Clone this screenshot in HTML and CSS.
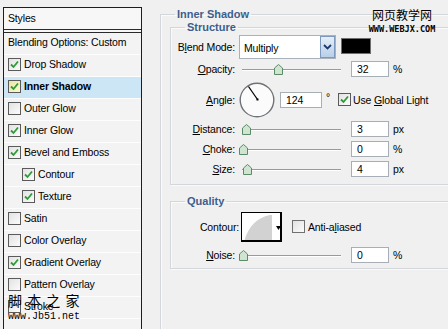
FILE: index.html
```html
<!DOCTYPE html>
<html>
<head>
<meta charset="utf-8">
<link rel="stylesheet" href="styles.css">
</head>
<body>
<div class="styles-panel">
  <div class="hdr">Styles</div>
  <div class="row plain">Blending Options: Custom</div>
  <div class="row"><span class="cb on"><svg viewBox="0 0 11 11"><path d="M2 5.5 L4.5 8 L9 2.5" /></svg></span>Drop Shadow</div>
  <div class="row sel"><span class="cb on hot"><svg viewBox="0 0 11 11"><path d="M2 5.5 L4.5 8 L9 2.5" /></svg></span><b>Inner Shadow</b></div>
  <div class="row"><span class="cb"></span>Outer Glow</div>
  <div class="row"><span class="cb on"><svg viewBox="0 0 11 11"><path d="M2 5.5 L4.5 8 L9 2.5" /></svg></span>Inner Glow</div>
  <div class="row"><span class="cb on"><svg viewBox="0 0 11 11"><path d="M2 5.5 L4.5 8 L9 2.5" /></svg></span>Bevel and Emboss</div>
  <div class="row sub"><span class="cb on"><svg viewBox="0 0 11 11"><path d="M2 5.5 L4.5 8 L9 2.5" /></svg></span>Contour</div>
  <div class="row sub"><span class="cb on"><svg viewBox="0 0 11 11"><path d="M2 5.5 L4.5 8 L9 2.5" /></svg></span>Texture</div>
  <div class="row"><span class="cb"></span>Satin</div>
  <div class="row"><span class="cb"></span>Color Overlay</div>
  <div class="row"><span class="cb on"><svg viewBox="0 0 11 11"><path d="M2 5.5 L4.5 8 L9 2.5" /></svg></span>Gradient Overlay</div>
  <div class="row"><span class="cb"></span>Pattern Overlay</div>
  <div class="row"><span class="cb"></span>Stroke</div>
</div>

<div class="main">
  <fieldset class="box outer">
    <legend>Inner Shadow</legend>
    <fieldset class="box inner structure">
      <legend>Structure</legend>
      <div class="line blend">
        <label class="lbl">B<u>l</u>end Mode:</label>
        <div class="select"><span class="sv">Multiply</span><span class="sbtn"><svg viewBox="0 0 9 6"><path d="M1 1 L4.5 4.5 L8 1"/></svg></span></div>
        <span class="swatch"></span>
      </div>
      <div class="line h16 opacity">
        <label class="lbl"><u>O</u>pacity:</label>
        <div class="slider"><span class="thumb" style="left:35px"><svg viewBox="0 0 9 11"><path d="M0.5 4 L4.5 0.5 L8.5 4 L8.5 10.5 L0.5 10.5 Z"/></svg></span></div>
        <span class="num">32</span><span class="unit">%</span>
      </div>
      <div class="line angle">
        <label class="lbl"><u>A</u>ngle:</label>
        <span class="dial"><svg viewBox="0 0 36 36"><circle cx="18" cy="18" r="16.8"/><line x1="18.5" y1="17.5" x2="9.5" y2="4.5"/><rect x="17.5" y="16.5" width="2" height="2"/></svg></span>
        <span class="num ang">124</span><span class="deg">°</span>
        <span class="cb on gl"><svg viewBox="0 0 11 11"><path d="M2 5.5 L4.5 8 L9 2.5" /></svg></span><span>Use <u>G</u>lobal Light</span>
      </div>
      <div class="line h16 dist">
        <label class="lbl"><u>D</u>istance:</label>
        <div class="slider"><span class="thumb" style="left:3px"><svg viewBox="0 0 9 11"><path d="M0.5 4 L4.5 0.5 L8.5 4 L8.5 10.5 L0.5 10.5 Z"/></svg></span></div>
        <span class="num">3</span><span class="unit">px</span>
      </div>
      <div class="line h16 choke">
        <label class="lbl"><u>C</u>hoke:</label>
        <div class="slider"><span class="thumb" style="left:0px"><svg viewBox="0 0 9 11"><path d="M0.5 4 L4.5 0.5 L8.5 4 L8.5 10.5 L0.5 10.5 Z"/></svg></span></div>
        <span class="num">0</span><span class="unit">%</span>
      </div>
      <div class="line h16 size">
        <label class="lbl"><u>S</u>ize:</label>
        <div class="slider"><span class="thumb" style="left:4px"><svg viewBox="0 0 9 11"><path d="M0.5 4 L4.5 0.5 L8.5 4 L8.5 10.5 L0.5 10.5 Z"/></svg></span></div>
        <span class="num">4</span><span class="unit">px</span>
      </div>
    </fieldset>

    <fieldset class="box inner quality">
      <legend>Quality</legend>
      <div class="line contour">
        <label class="lbl clbl">Contour:</label>
        <span class="cpreview"><svg viewBox="0 0 41 30"><path d="M2 29 C6 14 14 5 28 2 L30 2 L30 29 Z" fill="#d2d2d2"/><path d="M34 13 L39 13 L36.5 17 Z" fill="#000"/></svg></span>
        <span class="cb aa"></span><span>Anti-a<u>l</u>iased</span>
      </div>
      <div class="line h16 noise">
        <label class="lbl"><u>N</u>oise:</label>
        <div class="slider"><span class="thumb" style="left:0px"><svg viewBox="0 0 9 11"><path d="M0.5 4 L4.5 0.5 L8.5 4 L8.5 10.5 L0.5 10.5 Z"/></svg></span></div>
        <span class="num">0</span><span class="unit">%</span>
      </div>
    </fieldset>
  </fieldset>
</div>

<div class="wm-top"><div class="wm-cn">网页教学网</div><div class="wm-en">WWW.WEBJX.COM</div></div>
<div class="wm-bottom"><div class="wm-cn2">脚 本 之 家</div><div class="wm-url">www.Jb51.net</div></div>
</body>
</html>
```

FILE: styles.css
```css
html, body {
  margin: 0;
  height: 329px;
  overflow: hidden;
}
body {
  background: #f0f0f0;
  font-family: "Liberation Sans", Arial, sans-serif;
  font-size: 10.5px;
  letter-spacing: -0.15px;
  color: #000;
  display: flex;
  align-items: flex-start;
  padding: 7px 0 0 3px;
  box-sizing: border-box;
  position: relative;
}
.styles-panel {
  width: 139px;
  height: 340px;
  box-sizing: border-box;
  border: 1px solid #1e1e1e;
  border-bottom: none;
  background: #f3f3f3;
  flex: none;
}
.hdr {
  height: 21px;
  line-height: 20px;
  padding-left: 4px;
  border-bottom: 4px double #2a2a2a;
  background: #f7f7f7;
}
.row {
  box-sizing: border-box;
  height: 22px;
  padding-bottom: 3px;
  border-bottom: 1px solid #fdfdfd;
  display: flex;
  align-items: center;
  padding-left: 4px;
  white-space: nowrap;
}
.row.sub { padding-left: 18px; }
.row.sel { background: #cde6f5; }
.cb {
  width: 11px;
  height: 11px;
  border: 1px solid #5a5a5a;
  background: linear-gradient(135deg, #e2e2e2, #fbfbfb);
  margin-right: 3px;
  flex: none;
  display: inline-flex;
  align-items: center;
  justify-content: center;
}
.cb svg { width: 11px; height: 11px; }
.cb svg path {
  fill: none;
  stroke: #2f9a3a;
  stroke-width: 1.8;
}
.cb.hot { background: linear-gradient(135deg, #e9e6a4, #fbf8d0); }

.main {
  margin-left: 18px;
  margin-top: 1px;
  flex: none;
  width: 300px;
}
.box {
  margin: 0;
  padding: 0;
  border: 1px solid #d3d6da;
  box-shadow: inset 1px 1px 0 #fafafa, 1px 1px 0 #fafafa;
  min-width: 0;
}
.box legend {
  font-weight: bold;
  color: #3d5e8c;
  padding: 0 2px;
  margin-left: 14px;
  font-size: 11px;
  letter-spacing: 0;
  line-height: 13px;
}
.outer {
  height: 360px;
  border-right: none;
  padding-left: 9px;
}
.outer > legend { margin-left: 5px; }
.inner {
  border-right: none;
}
.structure {
  margin-top: 0;
  padding: 1px 0 7px 0;
}
.quality {
  margin-top: 10px;
  padding: 0 0 5px 0;
}
.line {
  display: flex;
  align-items: center;
  white-space: nowrap;
}
.h16 { height: 16px; }
.lbl {
  width: 64px;
  text-align: right;
  flex: none;
  margin-right: 4px;
}
.blend { height: 24px; }
.select {
  width: 97px;
  height: 24px;
  box-sizing: border-box;
  border: 1px solid #a9b1bb;
  background: #fff;
  display: flex;
  align-items: center;
  justify-content: space-between;
  flex: none;
}
.sv { padding-left: 4px; padding-top: 2px; }
.sbtn {
  width: 15px;
  height: 22px;
  box-sizing: border-box;
  border: 1px solid #7c9ac0;
  background: linear-gradient(#e6eef8, #b9cfe8);
  display: flex;
  align-items: center;
  justify-content: center;
}
.sbtn svg { width: 9px; height: 6px; }
.sbtn path { fill: none; stroke: #1d3a6e; stroke-width: 1.8; }
.swatch {
  width: 30px;
  height: 16px;
  box-sizing: border-box;
  background: #000;
  border: 1px solid #6e6e6e;
  margin-left: 5px;
  margin-top: -3px;
}
.opacity { margin-top: 2px; }
.slider {
  position: relative;
  width: 104px;
  height: 16px;
  flex: none;
  margin-right: 8px;
}
.slider::before {
  content: "";
  position: absolute;
  left: 3px;
  right: 2px;
  top: 8px;
  height: 1px;
  background: #9a9a9a;
  border-bottom: 1px solid #ffffff;
}
.thumb {
  position: absolute;
  top: 3px;
  width: 9px;
  height: 11px;
}
.thumb svg { width: 9px; height: 11px; display: block; }
.thumb path {
  fill: #cfe5d2;
  stroke: #5c8a67;
  stroke-width: 1;
}
.num {
  width: 38px;
  height: 16px;
  box-sizing: border-box;
  border: 1px solid #a7aeb6;
  background: #fff;
  padding-left: 5px;
  line-height: 14px;
  flex: none;
}
.unit { margin-left: 4px; }
.angle { height: 35px; margin-top: 5px; }
.dial {
  width: 36px;
  height: 36px;
  flex: none;
}
.dial svg { width: 36px; height: 36px; display: block; }
.dial circle {
  fill: #fbfbfb;
  stroke: #6f7378;
  stroke-width: 1.4;
}
.dial line { stroke: #000; stroke-width: 1.3; }
.dial rect { fill: #000; }
.num.ang { width: 42px; margin-left: 5px; }
.deg { margin-left: 4px; margin-top: -6px; }
.cb.gl { margin-left: 8px; margin-right: 2px; }
.dist { margin-top: 4px; }
.choke { margin-top: 4px; }
.size { margin-top: 4px; }
.contour { height: 31px; margin-top: 3px; }
.clbl { width: 68px; margin-right: 2px; }
.cpreview {
  width: 41px;
  height: 30px;
  box-sizing: border-box;
  border: 1px solid #000;
  border-right-width: 2px;
  border-bottom-width: 2px;
  background: #fff;
  flex: none;
  overflow: hidden;
}
.cpreview svg { width: 41px; height: 30px; display: block; }
.cb.aa { margin-left: 10px; margin-right: 3px; border-color: #707070; }
.noise { margin-top: 5px; }

.wm-top {
  position: absolute;
  left: 366px;
  top: 8px;
  text-align: center;
  width: 72px;
  letter-spacing: 0;
}
.wm-cn {
  font-family: "Noto Sans CJK SC", sans-serif;
  font-size: 12px;
  line-height: 14px;
}
.wm-en {
  font-family: "DejaVu Sans Mono", monospace;
  font-weight: bold;
  font-size: 8.5px;
  line-height: 10px;
  margin-top: 2px;
}
.wm-bottom {
  position: absolute;
  left: 8px;
  top: 291px;
  letter-spacing: 0;
}
.wm-cn2 {
  font-family: "Noto Sans CJK SC", sans-serif;
  font-size: 14px;
  line-height: 18px;
  letter-spacing: 1px;
}
.wm-url {
  font-family: "Liberation Mono", monospace;
  font-size: 10px;
  line-height: 12px;
  margin-top: 2px;
}
```
